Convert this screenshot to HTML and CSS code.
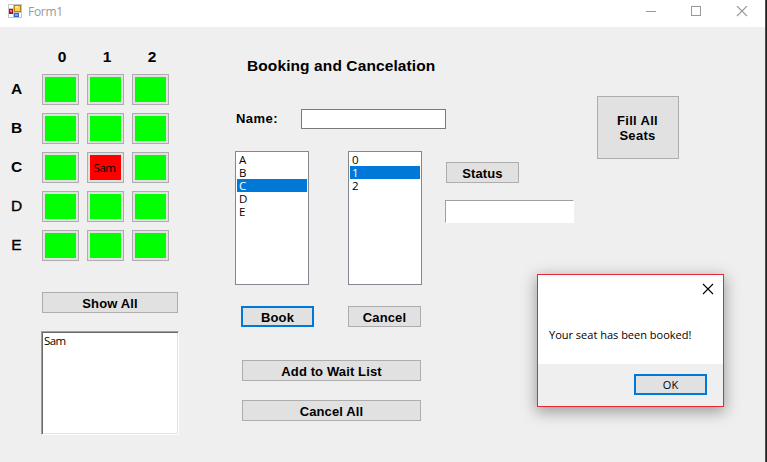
FILE: index.html
```html
<!DOCTYPE html>
<html lang="en">
<head>
<meta charset="utf-8">
<title>Form1</title>
<link rel="stylesheet" href="styles.css">
</head>
<body>
<div class="window">
  <header class="titlebar">
    <svg class="app-icon" width="14" height="14" viewBox="0 0 14 14" shape-rendering="crispEdges">
      <rect width="14" height="14" fill="#c3c5ca"/>
      <path d="M1 1h4v3H1zM1 10h4v3H1zM6 9h7v4H6z" fill="#fff"/>
      <rect x="1" y="5" width="4" height="5" fill="#a3161c"/><rect x="2" y="6" width="2" height="2" fill="#e87878"/>
      <rect x="6" y="1" width="7" height="7" fill="#b98310"/><rect x="7" y="2" width="5" height="5" fill="#ffd34d"/><rect x="7" y="2" width="3" height="2" fill="#ffe69a"/>
      <rect x="6" y="9" width="5" height="4" fill="#3465c8"/><rect x="7" y="10" width="3" height="2" fill="#76a9f6"/>
    </svg>
    <span class="caption">Form1</span>
    <svg class="controls" width="104" height="12" viewBox="0 0 104 12" fill="none" stroke="#999">
      <path d="M0 5.500h10M45.500 .5h9v9h-9z" shape-rendering="crispEdges"/><path d="M91 0l10 10M101 0l-10 10" stroke-width="1.1"/>
    </svg>
  </header>
  <main class="form">
    <section class="left">
      <div class="seats">
        <span></span><b>0</b><b>1</b><b>2</b>
        <b class="row">A</b><i class="seat"></i><i class="seat"></i><i class="seat"></i>
        <b class="row">B</b><i class="seat"></i><i class="seat"></i><i class="seat"></i>
        <b class="row">C</b><i class="seat"></i><i class="seat taken"><span>Sam</span></i><i class="seat"></i>
        <b class="row light">D</b><i class="seat"></i><i class="seat"></i><i class="seat"></i>
        <b class="row light">E</b><i class="seat"></i><i class="seat"></i><i class="seat"></i>
      </div>
      <button class="btn show-all">Show All</button>
      <div class="sunken log">Sam</div>
    </section>
    <section class="middle">
      <h1>Booking and Cancelation</h1>
      <div class="name-row"><label for="name">Name:</label><input id="name"></div>
      <div class="lists">
        <ul class="listbox"><li>A</li><li>B</li><li class="sel">C</li><li>D</li><li>E</li></ul>
        <ul class="listbox"><li>0</li><li class="sel">1</li><li>2</li></ul>
      </div>
      <div class="actions">
        <button class="btn default">Book</button><button class="btn cancel">Cancel</button>
      </div>
      <button class="btn wide">Add to Wait List</button>
      <button class="btn wide last">Cancel All</button>
    </section>
    <section class="status">
      <button class="btn small">Status</button>
      <div class="status-box"></div>
    </section>
    <section class="right"><button class="btn fill">Fill All<br>Seats</button></section>
  </main>
  <div class="dialog">
    <div class="dialog-top">
      <svg width="12" height="12" viewBox="0 0 12 12" stroke="#000" stroke-width="1.1"><path d="M1 1l10 10M11 1L1 11"/></svg>
    </div>
    <p>Your seat has been booked!</p>
    <div class="dialog-foot"><button class="btn ok">OK</button></div>
  </div>
</div>
</body>
</html>
```
FILE: styles.css
```css
* { box-sizing: border-box; }
body { margin: 0; background: #202022; color: #000; font: 11px/13px "Open Sans", "Noto Sans", sans-serif; overflow: hidden; }
.window { position: relative; width: 766px; height: 462px; border-right: 1px solid #505052; background: #efefef; }
.titlebar { display: flex; height: 27px; background: #fff; padding: 4px 15px 0 8px; }
.caption { margin-left: 6px; font-size: 12px; line-height: 16px; color: #999; letter-spacing: -.3px; }
.controls { margin: 2px 0 0 auto; }
.form { display: flex; height: 435px; }
.left { width: 235px; padding-top: 20px; }
.seats { display: grid; grid-template-columns: 34px repeat(3, 37px); grid-template-rows: 19px repeat(5, 31px); gap: 8px; }
.seats b { font: bold 15.5px/19px "Liberation Sans", sans-serif; text-align: center; padding-left: 3px; }
.seats b.row { line-height: 29px; padding-left: 0; margin-left: -1px; }
.seats b.light { font-weight: normal; -webkit-text-stroke: .35px #000; }
.seat { display: block; height: 31px; border: 1px solid #adadad; background: #00ff00; box-shadow: inset 0 0 0 2px #e1e1e1; font-style: normal; }
.taken { background: #f00; text-align: center; font-size: 11.5px; line-height: 30px; letter-spacing: -.5px; padding-right: 2px; }
.btn { display: block; margin: 0; padding: 2px 0 0; height: 21px; border: 1px solid #adadad; background: #e1e1e1; color: #000; font: bold 13px/15px "Liberation Sans", sans-serif; letter-spacing: .12px; border-radius: 0; }
.show-all { width: 136px; margin: 31px 0 0 42px; }
.log { width: 138px; height: 104px; margin: 18px 0 0 41px; padding: 2px; font-size: 11.5px; letter-spacing: -.6px; }
.sunken { background: #fff; border: 1px solid; border-color: #a0a0a0 #fff #fff #a0a0a0; box-shadow: inset 1px 1px #696969, inset -1px -1px #e3e3e3; }
.middle { width: 211px; padding-top: 29px; }
h1 { margin: 0 0 0 12px; height: 20px; font: bold 15.5px/20px "Liberation Sans", sans-serif; letter-spacing: .1px; white-space: nowrap; }
.name-row { display: flex; margin-top: 33px; height: 20px; }
.name-row label { width: 66px; padding-left: 1px; font: bold 13px/20px "Liberation Sans", sans-serif; letter-spacing: .45px; }
.name-row input { width: 145px; height: 20px; border: 1px solid #7a7a7a; background: #fff; padding: 0; }
.lists { display: flex; gap: 39px; margin-top: 22px; }
.listbox { width: 74px; height: 134px; margin: 0; padding: 1px; list-style: none; border: 1px solid #828790; background: #fff; }
.listbox li { height: 13px; padding-left: 2px; font-size: 11.5px; }
.listbox .sel { background: #0078d7; color: #fff; }
.actions { display: flex; gap: 34px; margin: 21px 0 0 6px; }
.actions .btn { width: 73px; }
.btn.default, .btn.ok { border: 2px solid #0078d7; }
.wide { width: 179px; margin: 33px 0 0 7px; }
.last { margin-top: 19px; }
.status { width: 151px; padding-top: 135px; margin-left: -1px; }
.small { width: 73px; margin-left: 1px; }
.status-box { width: 129px; height: 23px; margin-top: 17px; border: 1px solid; border-color: #a0a0a0 #fff #fff #a0a0a0; background: #fff; }
.right { padding: 69px 0 0 1px; }
.btn.fill { width: 82px; height: 63px; padding: 0 1px 0 0; letter-spacing: .3px; }
.dialog { position: absolute; left: 537px; top: 274px; width: 187px; height: 133px; border: 1px solid #e8263a; background: #fff; box-shadow: 0 4px 14px 1px rgba(0,0,0,.35); }
.dialog-top { display: flex; justify-content: flex-end; height: 53px; padding: 8px 9px 0 0; }
.dialog p { margin: 0; height: 36px; padding-left: 11px; white-space: nowrap; }
.dialog-foot { height: 42px; background: #efefef; padding: 10px 16px 0 0; display: flex; justify-content: flex-end; }
.btn.ok { width: 73px; padding: 0; font: 11px/15px "Open Sans", sans-serif; }
```
